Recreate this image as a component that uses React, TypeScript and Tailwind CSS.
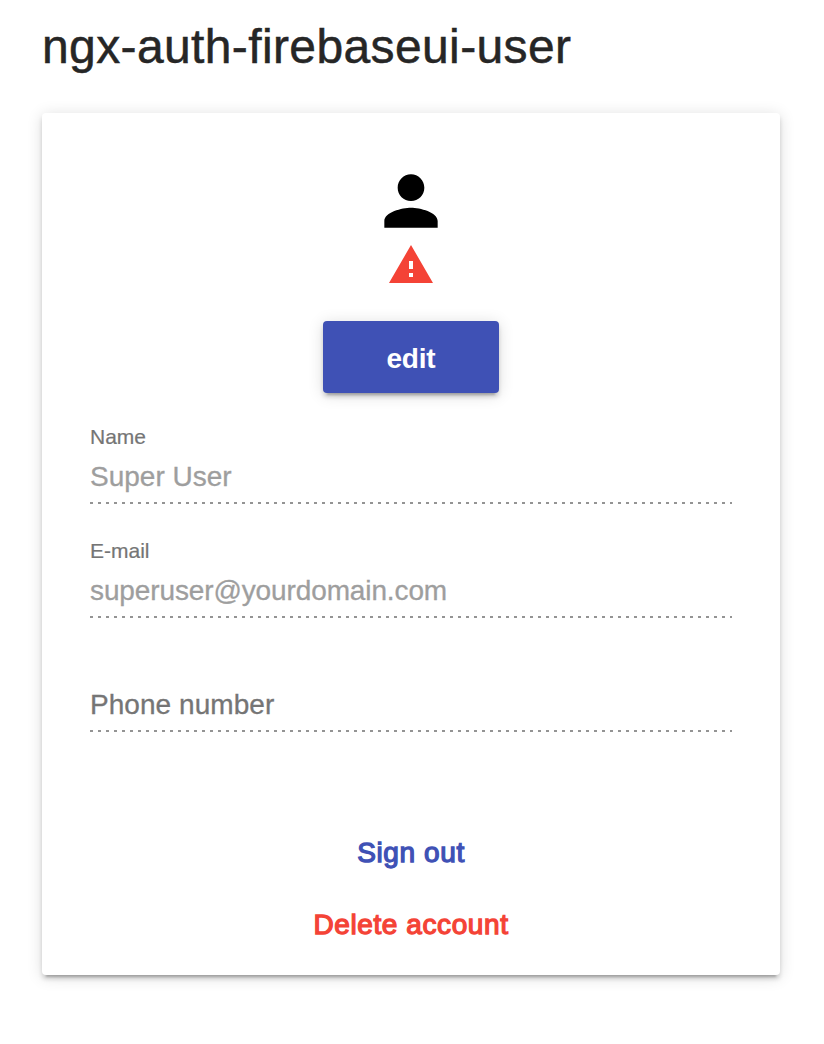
import React from "react";

function DottedLine() {
  return (
    <div className="h-[2px] w-[642px] bg-[repeating-linear-gradient(to_right,#949494_0,#949494_3px,transparent_3px,transparent_8px)]" />
  );
}

function Field({ label, value, valueClass }: { label: string; value: string; valueClass: string }) {
  return (
    <div className="flex h-[114px] flex-col">
      <div className="h-[32px] pt-[3px] text-[21px] leading-[26px] text-[#757575] [-webkit-text-stroke:0.2px_currentColor]">
        <span className="inline-block whitespace-nowrap">{label}</span>
      </div>
      <div className="h-[49px] pt-[8px] text-[28px] leading-[32px] text-[#9e9e9e] [-webkit-text-stroke:0.3px_currentColor]">
        <span className={"inline-block whitespace-nowrap " + valueClass}>{value}</span>
      </div>
      <DottedLine />
    </div>
  );
}

export default function App() {
  return (
    <div className="h-[1044px] w-[824px] overflow-hidden bg-white px-[42px] pt-[19px] font-['Liberation_Sans',Arial,sans-serif]">
      <h1 className="h-[94px] text-[48px] leading-[56px] tracking-[0.38px] text-[#262626] [-webkit-text-stroke:0.5px_currentColor]">
        <span className="inline-block whitespace-nowrap">ngx-auth-firebaseui-user</span>
      </h1>
      <main className="flex h-[862px] w-[738px] flex-col rounded-[4px] bg-white px-[48px] shadow-[0_6px_2px_-4px_rgba(0,0,0,0.2),0_4px_4px_0_rgba(0,0,0,0.14),0_2px_16px_0_rgba(0,0,0,0.14)]">
        <div className="flex flex-col items-center pt-[48px]">
          <svg className="h-[80px] w-[80px]" viewBox="0 0 24 24">
            <path d="M12 12c2.21 0 4-1.79 4-4s-1.79-4-4-4-4 1.79-4 4 1.79 4 4 4zm0 2c-2.67 0-8 1.34-8 4v2h16v-2c0-2.66-5.33-4-8-4z" />
          </svg>
          <svg className="h-[48px] w-[48px]" viewBox="0 0 24 24">
            <path fill="#f44336" d="M1 21h22L12 2 1 21zm12-3h-2v-2h2v2zm0-4h-2v-4h2v4z" />
          </svg>
          <button className="mt-[32px] h-[72px] w-[176px] rounded-[4px] bg-[#3f51b5] pt-[3px] text-[28px] font-bold tracking-[-0.2px] text-white shadow-[0_6px_2px_-4px_rgba(0,0,0,0.2),0_4px_4px_0_rgba(0,0,0,0.14),0_2px_16px_0_rgba(0,0,0,0.14)]">
            edit
          </button>
        </div>
        <div className="pt-[28px]">
          <Field label="Name" value="Super User" valueClass="tracking-normal" />
          <Field label="E-mail" value="superuser@yourdomain.com" valueClass="tracking-[-0.12px]" />
          <div className="h-[114px] pt-[32px]">
            <div className="h-[49px] pt-[8px] text-[28px] leading-[32px] tracking-[0.05px] text-[#757575] [-webkit-text-stroke:0.3px_currentColor]">Phone number</div>
            <DottedLine />
          </div>
        </div>
        <div className="flex flex-col items-center pt-[54px] text-[28px] tracking-[0.6px] [-webkit-text-stroke:1.3px_currentColor]">
          <button className="h-[72px] text-[#3f51b5]">Sign out</button>
          <button className="h-[72px] text-[#f44336]">Delete account</button>
        </div>
      </main>
    </div>
  );
}
